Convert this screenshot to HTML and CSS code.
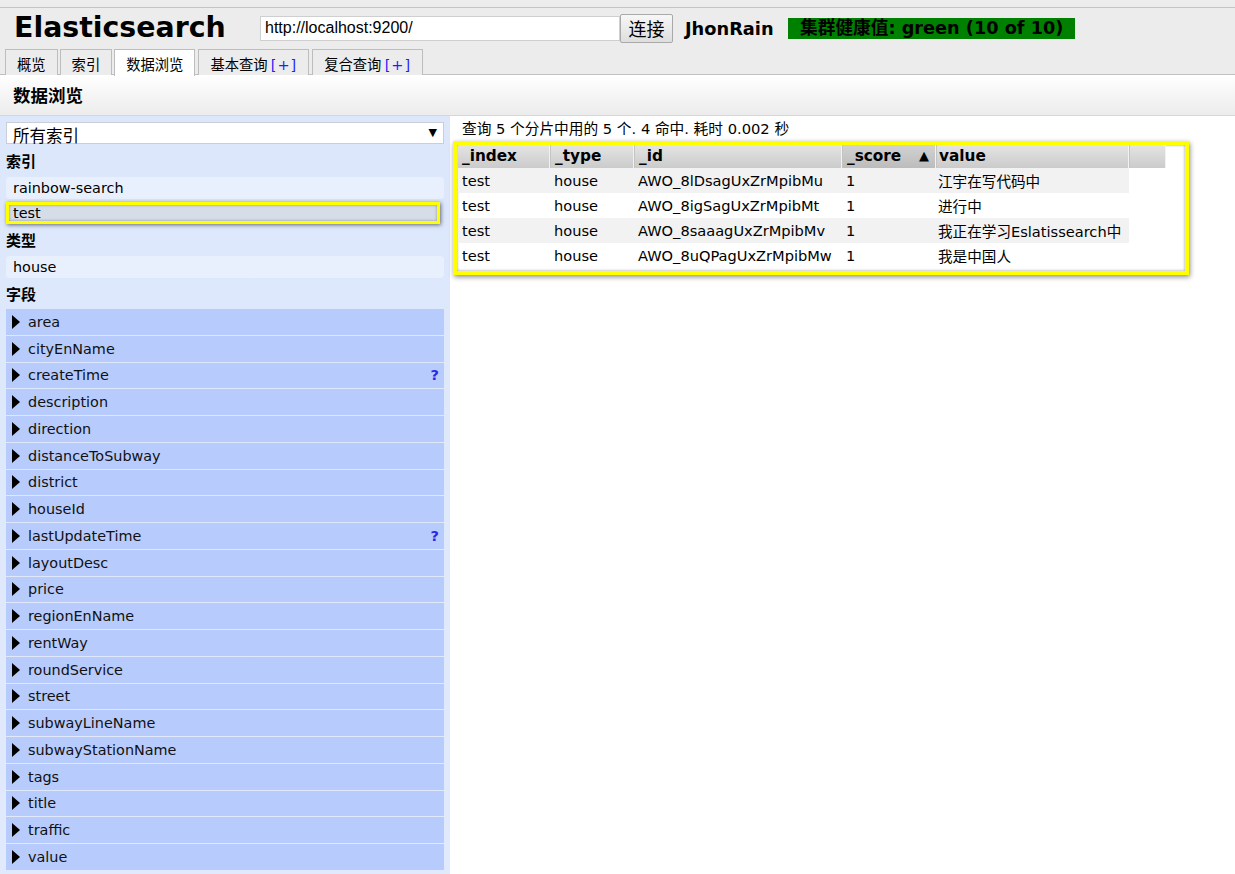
FILE: index.html
```html
<!DOCTYPE html>
<html>
<head>
<meta charset="utf-8">
<link rel="stylesheet" href="styles.css">
</head>
<body>
<div class="top">
  <div class="top-inner">
    <div class="headbar">
      <h1 class="title">Elasticsearch</h1>
      <input class="url" type="text" value="http://localhost:9200/">
      <button class="connect">连接</button>
      <span class="cluster">JhonRain</span>
      <span class="health">集群健康值: green (10 of 10)</span>
    </div>
    <div class="tabs">
      <div class="tab">概览</div>
      <div class="tab">索引</div>
      <div class="tab active">数据浏览</div>
      <div class="tab">基本查询 <span class="plus">[+]</span></div>
      <div class="tab">复合查询 <span class="plus">[+]</span></div>
    </div>
  </div>
</div>
<div class="section-head">数据浏览</div>
<div class="main">
  <div class="side">
    <div class="select"><span>所有索引</span><span class="arrow">▼</span></div>
    <div class="label l1">索引</div>
    <div class="item i1">rainbow-search</div>
    <div class="item selected">test</div>
    <div class="label l2">类型</div>
    <div class="item i3">house</div>
    <div class="label l3">字段</div>
    <div class="fields">
      <div class="field"><span class="tri"></span>area</div>
      <div class="field"><span class="tri"></span>cityEnName</div>
      <div class="field"><span class="tri"></span>createTime<span class="q">?</span></div>
      <div class="field"><span class="tri"></span>description</div>
      <div class="field"><span class="tri"></span>direction</div>
      <div class="field"><span class="tri"></span>distanceToSubway</div>
      <div class="field"><span class="tri"></span>district</div>
      <div class="field"><span class="tri"></span>houseId</div>
      <div class="field"><span class="tri"></span>lastUpdateTime<span class="q">?</span></div>
      <div class="field"><span class="tri"></span>layoutDesc</div>
      <div class="field"><span class="tri"></span>price</div>
      <div class="field"><span class="tri"></span>regionEnName</div>
      <div class="field"><span class="tri"></span>rentWay</div>
      <div class="field"><span class="tri"></span>roundService</div>
      <div class="field"><span class="tri"></span>street</div>
      <div class="field"><span class="tri"></span>subwayLineName</div>
      <div class="field"><span class="tri"></span>subwayStationName</div>
      <div class="field"><span class="tri"></span>tags</div>
      <div class="field"><span class="tri"></span>title</div>
      <div class="field"><span class="tri"></span>traffic</div>
      <div class="field"><span class="tri"></span>value</div>
    </div>
  </div>
  <div class="content">
    <div class="info">查询 5 个分片中用的 5 个. 4 命中. 耗时 0.002 秒</div>
    <div class="results">
      <table class="grid">
        <colgroup>
          <col class="c1"><col class="c2"><col class="c3"><col class="c4"><col class="c5"><col class="c6">
        </colgroup>
        <thead>
          <tr><th>_index</th><th>_type</th><th>_id</th><th class="sorted">_score <span class="sort">▲</span></th><th>value</th><th class="blank"></th></tr>
        </thead>
        <tbody>
          <tr class="odd"><td>test</td><td>house</td><td>AWO_8lDsagUxZrMpibMu</td><td>1</td><td>江宇在写代码中</td></tr>
          <tr><td>test</td><td>house</td><td>AWO_8igSagUxZrMpibMt</td><td>1</td><td>进行中</td></tr>
          <tr class="odd"><td>test</td><td>house</td><td>AWO_8saaagUxZrMpibMv</td><td>1</td><td>我正在学习Eslatissearch中</td></tr>
          <tr><td>test</td><td>house</td><td>AWO_8uQPagUxZrMpibMw</td><td>1</td><td>我是中国人</td></tr>
        </tbody>
      </table>
    </div>
  </div>
</div>
</body>
</html>
```

FILE: styles.css
```css
* { box-sizing: border-box; }
html, body { margin: 0; padding: 0; }
body {
  background: #fff;
  font-family: "DejaVu Sans", "Noto Sans CJK SC", sans-serif;
  font-size: 14.4px;
  color: #000;
  min-height: 874px;
  overflow: hidden;
}
.top { background: #ececec; padding-top: 7px; }
.top-inner { border-top: 1px solid #c4c4c4; }
.headbar {
  display: flex;
  align-items: center;
  height: 40px;
  padding-left: 14px;
}
.title {
  margin: 0;
  width: 246px;
  font-size: 28.4px;
  font-weight: bold;
  line-height: 32px;
  position: relative;
  top: 0;
}
.url {
  width: 360px;
  height: 25px;
  border: 1px solid #cfcfcf;
  background: #fff;
  font-family: "Liberation Sans", sans-serif;
  font-size: 16px;
  padding: 0 4px;
  margin: 0;
  outline: none;
}
.connect {
  width: 53px;
  height: 29px;
  margin: 0;
  border: 1px solid #a9a9a9;
  border-radius: 2px;
  background: linear-gradient(#f7f7f7, #dedede);
  font-family: "Noto Sans CJK SC", sans-serif;
  font-size: 18px;
  padding: 0;
  color: #000;
}
.cluster {
  margin-left: 12px;
  font-weight: bold;
  font-size: 17.8px;
  width: 103px;
}
.health {
  background: #008000;
  color: #000;
  font-weight: bold;
  font-size: 17.7px;
  height: 21px;
  line-height: 21px;
  padding: 0 12px;
  white-space: nowrap;
}
.tabs {
  display: flex;
  padding-left: 5px;
  height: 26px;
  border-bottom: 1px solid #c0c0c0;
  margin-top: 1px;
}
.tab {
  height: 26px;
  padding: 0 11px;
  border: 1px solid #bdbdbd;
  border-bottom: none;
  margin-right: 3px;
  background: #ececec;
  font-family: "Noto Sans CJK SC", sans-serif;
  font-size: 14.3px;
  line-height: 28px;
  white-space: nowrap;
}
.tab:nth-child(1) { margin-right: 2px; }
.tab:nth-child(2) { margin-right: 2px; }
.tab.active { background: #fff; height: 27px; position: relative; z-index: 1; }
.plus {
  color: #1f1fff;
  font-family: "DejaVu Sans", sans-serif;
  font-size: 14.5px;
  letter-spacing: 1px;
}
.section-head {
  height: 41px;
  background: linear-gradient(#ffffff, #ececec);
  border-bottom: 1px solid #d2d6de;
  padding-left: 13px;
  font-family: "Noto Sans CJK SC", sans-serif;
  font-weight: bold;
  font-size: 17.5px;
  line-height: 40px;
}
.main { display: flex; min-height: 760px; }
.side {
  width: 450px;
  flex: none;
  background: linear-gradient(#dce7fb, #e1eafc);
  padding: 6px 6px 4px 6px;
}
.select {
  height: 22px;
  background: #fff;
  border: 1px solid #c9ced8;
  display: flex;
  justify-content: space-between;
  align-items: center;
  padding: 0 6px;
  font-family: "Noto Sans CJK SC", sans-serif;
  font-size: 16.5px;
  line-height: 22px;
}
.select span:first-child { position: relative; top: 2px; }
.arrow { font-size: 11px; font-family: "DejaVu Sans", sans-serif; }
.label {
  height: 28px;
  line-height: 28px;
  font-weight: bold;
  font-family: "Noto Sans CJK SC", sans-serif;
  font-size: 15px;
}
.l1 { margin-top: 3px; }
.l2 { margin-top: 2px; }
.l3 { margin-top: 2px; }
.item {
  height: 22px;
  line-height: 22px;
  padding-left: 7px;
  background: #e9f0fd;
  border-radius: 4px;
}
.i1 { margin-top: 2px; }
.i3 { margin-top: 2px; }
.selected {
  margin-top: 3px;
  width: 434px;
  background: #d5dde9;
  border: 3px solid #ffff00;
  border-radius: 0;
  padding-left: 4px;
  line-height: 16px;
  box-shadow: 1px 1px 4px rgba(0,0,0,0.55), inset 0 0 3px rgba(0,0,0,0.35);
}
.fields {
  margin-top: 1px;
  display: flex;
  flex-direction: column;
  gap: 1px;
}
.field {
  height: 25.75px;
  background: #b8cbfd;
  display: flex;
  align-items: center;
  padding-left: 6px;
  padding-right: 5px;
  color: #111;
}
.tri {
  width: 0; height: 0;
  border-left: 8px solid #000;
  border-top: 7px solid transparent;
  border-bottom: 7px solid transparent;
  margin-right: 8px;
}
.q {
  margin-left: auto;
  color: #2a2ae6;
  font-weight: bold;
  font-size: 14.5px;
}
.content { flex: 1; padding-left: 3px; }
.info {
  padding-left: 9px;
  padding-top: 4px;
  height: 25px;
  line-height: 18px;
  font-size: 14.7px;
}
.results {
  width: 736px;
  height: 134px;
  border: 4px solid #ffff00;
  box-shadow: 1px 2px 5px rgba(0,0,0,0.45), inset 0 0 3px rgba(0,0,0,0.4);
  padding: 0 0 0 1px;
}
.grid {
  border-collapse: separate;
  border-spacing: 0;
  table-layout: fixed;
  width: 708px;
}
.c1 { width: 92px; }
.c2 { width: 84px; }
.c3 { width: 208px; }
.c4 { width: 94px; }
.c5 { width: 193px; }
.c6 { width: 37px; }
.grid th {
  height: 23px;
  text-align: left;
  font-weight: bold;
  font-size: 15.3px;
  line-height: 20px;
  padding: 0 0 2px 4px;
  background: linear-gradient(#e4e4e4, #cbcbcb);
  border-right: 1px solid #f2f2f2;
  border-left: 1px solid #c4c4c4;
  white-space: nowrap;
}
.grid th:first-child { border-left: none; }
.grid th.sorted { background: linear-gradient(#d2d2d2, #bcbcbc); }
.sort { float: right; margin-right: 6px; font-size: 13px; }
.grid td {
  height: 25px;
  padding: 0 0 1px 4px;
  font-size: 14.6px;
  white-space: nowrap;
  overflow: hidden;
}
.grid tr.odd td { background: #f2f2f2; }
.grid td:last-child { padding-left: 2px; }
.grid th:nth-child(5) { padding-left: 2px; }
```
